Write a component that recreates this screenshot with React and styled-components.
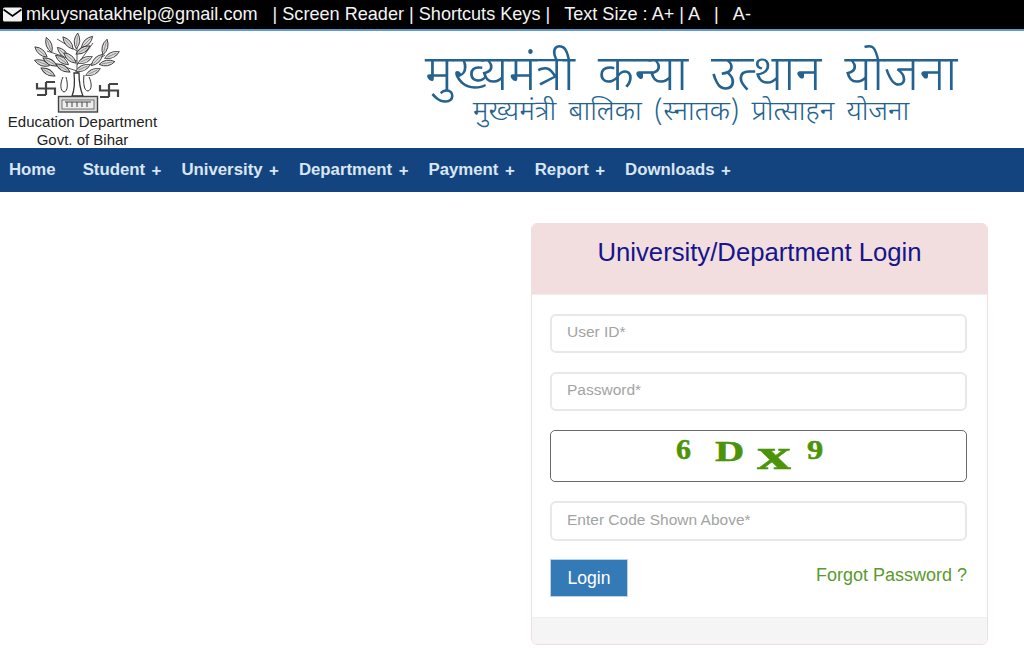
import React from "react";
import styled, { createGlobalStyle } from "styled-components";

const Global = createGlobalStyle`
  html, body { margin: 0; padding: 0; background: #fff; }
  body { font-family: "Liberation Sans", Arial, sans-serif; overflow: hidden; }
  * { box-sizing: border-box; }
`;

const Page = styled.div`
  width: 1024px;
  height: 652px;
  overflow: hidden;
`;

const TopBar = styled.div`
  height: 31px;
  background: #000;
  border-bottom: 2px solid #5b9bd0;
  color: #f4f4f4;
  display: flex;
  align-items: center;
  padding-left: 3px;
  font-size: 18.1px;
  white-space: pre;
`;

const Mail = styled.svg`
  width: 19px;
  height: 15px;
  margin-right: 4px;
  flex: none;
`;

const TopText = styled.span`
  margin-left: ${(p) => p.$gap || 0}px;
`;

const Header = styled.header`
  height: 117px;
  display: flex;
  background: #fff;
`;

const LogoCol = styled.div`
  width: 165px;
  display: flex;
  flex-direction: column;
  align-items: center;
  color: #222;
  font-size: 15px;
  line-height: 18px;
  text-align: center;
`;

const Emblem = styled.svg`
  width: 90px;
  height: 82px;
  flex: none;
  margin-right: 9px;
`;

const TitleCol = styled.div`
  flex: 1;
  display: flex;
  flex-direction: column;
  align-items: center;
  padding: 22px 0 0 193px;
  color: #24628f;
  font-family: "Noto Sans Devanagari", "Noto Sans", "Noto Sans CJK SC", sans-serif;
  font-weight: 300;
  white-space: nowrap;
`;

const MainTitle = styled.div`
  font-size: 50px;
  line-height: 50px;
  word-spacing: 10px;
`;

const SubTitle = styled.div`
  font-size: 27.8px;
  line-height: 26px;
  word-spacing: 5px;
  margin-top: -3px;
`;

const Nav = styled.nav`
  height: 44px;
  background: #144480;
  display: flex;
  align-items: center;
  padding: 0 0 0 9px;
  color: #d9e6f2;
  font-size: 16.8px;
  line-height: 20px;
  font-weight: 700;
`;

const NavItem = styled.span`
  margin-right: ${(p) => p.$gap}px;
  white-space: pre;
`;

const NavPlus = styled.span`
  margin-left: 6.5px;
  line-height: 0;
  position: relative;
  top: 1px;
`;

const Main = styled.main`
  display: flex;
  justify-content: flex-end;
  padding: 31px 36px 0 0;
`;

const Card = styled.section`
  width: 457px;
  height: 422px;
  border: 1px solid #f2dede;
  border-radius: 6px;
  overflow: hidden;
  display: flex;
  flex-direction: column;
`;

const CardHead = styled.div`
  height: 71px;
  background: #f2dede;
  color: #15158c;
  font-size: 25.7px;
  display: flex;
  align-items: center;
  justify-content: center;
  padding-bottom: 13px;
  border-bottom: 1px solid #eee;
`;

const CardBody = styled.form`
  flex: 1;
  padding: 19px 20px 0 18px;
  display: flex;
  flex-direction: column;
`;

const Field = styled.input`
  height: ${(p) => p.$h || 39}px;
  width: 100%;
  border: 2px solid #e8e8e8;
  border-radius: 6px;
  padding: 0 15px 3px;
  margin-bottom: ${(p) => p.$mb || 19}px;
  font: 15.5px "Liberation Sans", Arial, sans-serif;
  background: #fff;
  outline: none;
  &::placeholder { color: #a3a3a3; opacity: 1; }
`;

const Captcha = styled.div`
  height: 52px;
  border: 1.5px solid #6a6a6a;
  border-radius: 5px;
  margin-bottom: 19px;
  position: relative;
  overflow: hidden;
`;

const CaptchaChar = styled.span`
  position: absolute;
  left: ${(p) => p.$x}px;
  top: ${(p) => p.$y}px;
  font: 700 ${(p) => p.$size}px "Liberation Serif", serif;
  color: #4b9409;
  transform: scale(${(p) => p.$sx || 1}, 1);
  transform-origin: left center;
  -webkit-text-stroke: 0.5px #4b9409;
  line-height: 1;
`;

const Actions = styled.div`
  display: flex;
  justify-content: space-between;
  align-items: flex-start;
`;

const LoginBtn = styled.button`
  width: 78px;
  height: 38px;
  background: #337ab7;
  border: 1px solid #b9d3ea;
  color: #fff;
  font: 17.6px "Liberation Sans", Arial, sans-serif;
`;

const Forgot = styled.a`
  color: #5a9a2c;
  font-size: 18px;
  line-height: 20px;
  margin-top: 6px;
`;

const CardFoot = styled.div`
  height: 27px;
  background: #f5f5f5;
  border-top: 1px solid #eee;
`;

// leaf positions: cx, cy, angle
const leaves = [
  [16, 14, 70], [8, 21, 40], [9, 32, 20], [17, 31, 30], [15, 41, 30],
  [30, 22, 45], [35, 12, 50], [44, 10, -85], [54, 11, -45], [50, 19, -30],
  [30, 37, 30], [29, 29, 35], [52, 29, -25], [64, 29, -45], [72, 16, -75],
  [79, 24, -25], [74, 32, -10], [60, 41, -25], [37, 27, 40], [50, 37, -25],
];

function BiharEmblem() {
  return (
    <Emblem viewBox="0 0 90 82">
      <g fill="none" stroke="#444" strokeWidth="0.9">
        <path d="M44 14 V50 M44 20 L24 8 M44 30 L14 20 M44 40 L20 32 M44 34 L60 12 M44 42 L72 24" />
      </g>
      {leaves.map(([x, y, a], i) => (
        <g key={i} transform={`translate(${x} ${y}) rotate(${a})`}>
          <path d="M-8 0 Q0 -5.5 8 0 Q0 5.5 -8 0 Z" fill="#dcdcdc" stroke="#3a3a3a" strokeWidth="0.9" />
          <path d="M-5 0 H5" stroke="#777" strokeWidth="0.7" />
        </g>
      ))}
      <g fill="none" stroke="#333" strokeWidth="1">
        <path d="M41 42 C42 52 42 58 39 65 H50 C47 58 46 52 46 42 Z" fill="#fff" strokeWidth="1.3" />
        <path d="M30 46 C27 52 27 60 31 61 C35 60 35 53 33 46" />
        <path d="M51 44 C50 52 51 60 55 60 C59 59 59 52 56 46" />
      </g>
      {/* the two emblem marks either side of the trunk */}
      <g fill="none" stroke="#444" strokeWidth="2.2">
        <path d="M4 52 V57.5 H22 V64 M13 51 V64 M13 51 H22 M4 64 H13" />
        <path d="M67 54 V59.5 H85 V66 M76 53 V66 M76 53 H85 M67 66 H76" />
      </g>
      <rect x="25.5" y="65.5" width="39" height="15.5" fill="#ddd" stroke="#444" strokeWidth="1.4" />
      <rect x="29" y="69" width="32" height="9" fill="#eee" stroke="#555" strokeWidth="0.8" />
      <path d="M32 71 H58 M34 71 V76 M39 71 V76 M44 71 V76 M49 71 V76 M54 71 V76" stroke="#444" strokeWidth="1" fill="none" />
    </Emblem>
  );
}

const navItems = [
  ["Student", 20],
  ["University", 20],
  ["Department", 20],
  ["Payment", 20],
  ["Report", 20],
  ["Downloads", 0],
];

export default function App() {
  return (
    <Page>
      <Global />
      <TopBar>
        <Mail viewBox="0 0 19 15">
          <rect x="0" y="0.5" width="19" height="14" rx="1.5" fill="#f2f2f2" />
          <path d="M0.5 2.5 L9.5 9 L18.5 2.5" fill="none" stroke="#000" strokeWidth="1.6" />
        </Mail>
        <span>mkuysnatakhelp@gmail.com</span>
        <TopText $gap={15}>| Screen Reader | Shortcuts Keys |</TopText>
        <TopText $gap={14}>Text Size : A+ | A</TopText>
        <TopText $gap={14}>|</TopText>
        <TopText $gap={14}>A-</TopText>
      </TopBar>
      <Header>
        <LogoCol>
          <BiharEmblem />
          <span>Education Department</span>
          <span>Govt. of Bihar</span>
        </LogoCol>
        <TitleCol>
          <MainTitle>मुख्यमंत्री कन्या उत्थान योजना</MainTitle>
          <SubTitle>मुख्यमंत्री बालिका (स्नातक) प्रोत्साहन योजना</SubTitle>
        </TitleCol>
      </Header>
      <Nav>
        <NavItem $gap={27}>Home</NavItem>
        {navItems.map(([label, gap]) => (
          <NavItem key={label} $gap={gap}>
            {label}
            <NavPlus>+</NavPlus>
          </NavItem>
        ))}
      </Nav>
      <Main>
        <Card>
          <CardHead>University/Department Login</CardHead>
          <CardBody>
            <Field placeholder="User ID*" />
            <Field placeholder="Password*" />
            <Captcha>
              <CaptchaChar $x={125} $y={3} $size={30}>6</CaptchaChar>
              <CaptchaChar $x={164} $y={5} $size={30} $sx={1.35}>D</CaptchaChar>
              <CaptchaChar $x={206} $y={2} $size={44} $sx={1.55}>x</CaptchaChar>
              <CaptchaChar $x={256} $y={6} $size={27} $sx={1.2}>9</CaptchaChar>
            </Captcha>
            <Field placeholder="Enter Code Shown Above*" $h={40} $mb={18} />
            <Actions>
              <LoginBtn type="button">Login</LoginBtn>
              <Forgot>Forgot Password ?</Forgot>
            </Actions>
          </CardBody>
          <CardFoot />
        </Card>
      </Main>
    </Page>
  );
}
